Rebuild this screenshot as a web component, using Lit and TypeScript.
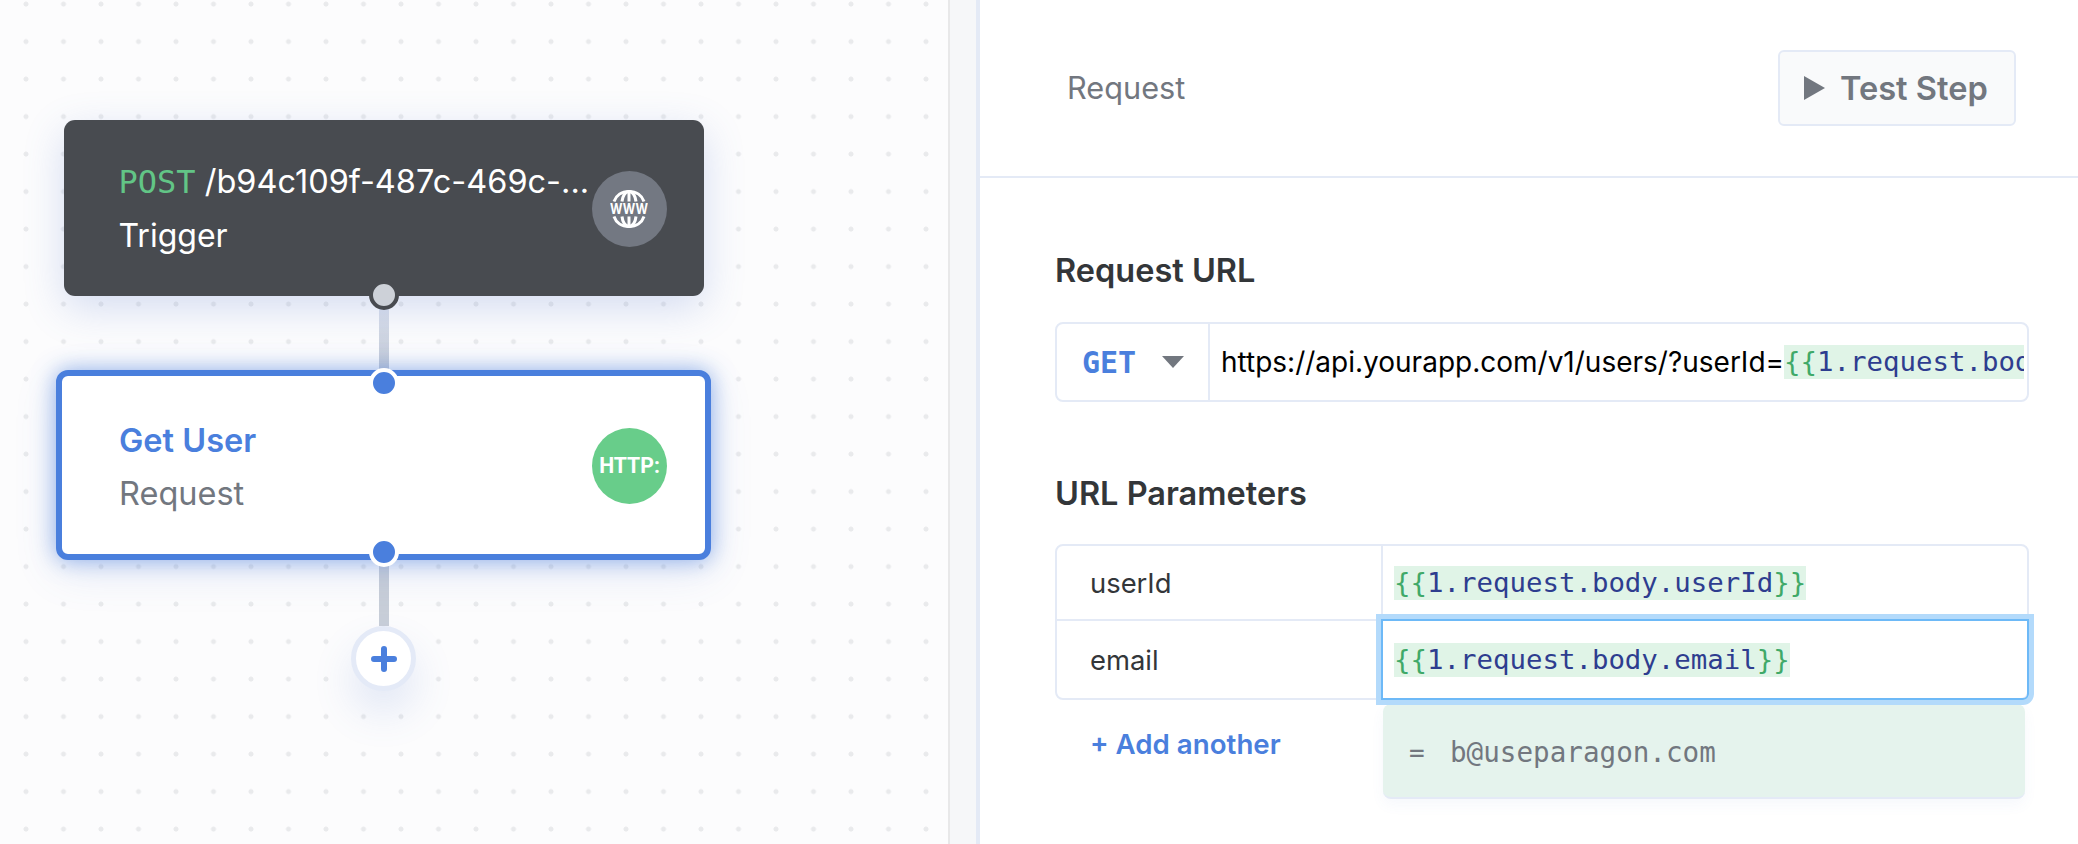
import { LitElement, html, css } from 'lit';
import { customElement } from 'lit/decorators.js';

const token = (path: string) => html`<span class="token"><i>{{</i>${path}<i>}}</i></span>`;

@customElement('app-root')
export class AppRoot extends LitElement {
  static styles = css`
    :host {
      display: flex;
      width: 2078px;
      height: 844px;
      overflow: hidden;
      background: #fff;
      font-family: Inter, 'Noto Sans', sans-serif;
    }

    /* ===== Canvas ===== */
    .canvas {
      flex: 0 0 948px;
      box-sizing: border-box;
      padding-top: 120px;
      background-color: #fcfcfd;
      background-image: radial-gradient(circle, #e9eaec 2.2px, transparent 2.8px);
      background-size: 37.5px 37.5px;
      background-position: 7.25px 22.85px;
    }

    .flow {
      width: 767px;
      display: flex;
      flex-direction: column;
      align-items: center;
    }

    .node {
      position: relative;
      z-index: 1;
      box-sizing: border-box;
      display: flex;
      align-items: center;
      justify-content: space-between;
      font-size: 32.5px;
      white-space: nowrap;
    }

    .node--trigger {
      width: 640px;
      height: 176px;
      padding: 1px 37px 0 55px;
      border-radius: 11px;
      background: #484b50;
      color: #fff;
      line-height: 54px;
      box-shadow: 0 12px 40px rgba(88, 122, 205, 0.24);
    }

    .node--step {
      width: 655px;
      height: 190px;
      padding: 4px 38px 0 57px;
      border: 6px solid #4a7fdd;
      border-radius: 12px;
      background: #fff;
      color: #72777f;
      line-height: 53px;
      box-shadow: 0 0 22px rgba(74, 127, 221, 0.6), 0 12px 44px rgba(88, 122, 205, 0.14);
    }

    .method {
      color: #62c586;
      font-family: 'DejaVu Sans Mono', monospace;
      font-size: 32px;
      font-weight: 400;
    }

    .light {
      font-size: 32px;
    }

    .title {
      color: #4a7fdd;
      font-weight: 600;
    }

    .icon {
      flex: none;
      width: 75px;
      height: 76px;
      display: flex;
      align-items: center;
      justify-content: center;
      border-radius: 50%;
    }

    .icon--www {
      background: #737882;
    }

    .icon--http {
      margin-top: -2px;
      background: #68cd8a;
      color: #fff;
      font-size: 21.2px;
      font-weight: 700;
      line-height: 1;
      font-family: Roboto, Inter, sans-serif;
    }

    .handle {
      position: absolute;
      left: 50%;
      width: 22px;
      height: 22px;
      margin-left: -15px;
      border-radius: 50%;
      border: 4px solid #fff;
      background: #4a7fdd;
    }

    .handle--out {
      bottom: -14px;
      background: #cdd1d8;
      border-color: #484b50;
    }

    .handle--in {
      top: -8px;
    }

    .handle--step-out {
      bottom: -13px;
    }

    .wire {
      width: 10px;
      background: #c8ced8;
    }

    .wire--top {
      height: 74px;
      background: linear-gradient(#e0e5f0, #c2c9d6);
    }

    .wire--bottom {
      height: 66px;
    }

    .add {
      position: relative;
      z-index: 1;
      box-sizing: border-box;
      width: 65px;
      height: 65px;
      display: flex;
      align-items: center;
      justify-content: center;
      border-radius: 50%;
      border: 5px solid #e4eaf7;
      background: #fff;
      box-shadow: 0 22px 40px rgba(88, 122, 205, 0.16);
    }

    /* ===== Gutter between canvas and panel ===== */
    .gutter {
      flex: 0 0 26px;
      border-left: 2px solid #e8e8e9;
      border-right: 4px solid #e4eaf6;
      background: #f6f7f9;
    }

    /* ===== Panel ===== */
    .panel {
      flex: 1;
      min-width: 0;
    }

    .header {
      box-sizing: border-box;
      height: 178px;
      padding: 0 62px 0 87px;
      display: flex;
      align-items: center;
      justify-content: space-between;
      border-bottom: 2px solid #e4eaf6;
      color: #72777f;
      font-size: 30.7px;
    }

    .header-title {
      margin-top: -2px;
    }

    .test {
      box-sizing: border-box;
      width: 238px;
      height: 76px;
      display: flex;
      align-items: center;
      gap: 15px;
      padding-left: 24px;
      border: 2px solid #e4eaf6;
      border-radius: 6px;
      background: #f9fafb;
      font-size: 32.6px;
      font-weight: 600;
      white-space: nowrap;
    }

    .body {
      padding: 73px 49px 0 75px;
    }

    .label {
      margin: 0 0 30px;
      color: #333639;
      font-size: 32.5px;
      font-weight: 600;
      line-height: 40px;
    }

    .url {
      box-sizing: border-box;
      height: 80px;
      display: flex;
      margin: 31px 0 72px;
      border: 2px solid #e4eaf6;
      border-radius: 8px;
      overflow: hidden;
    }

    .url-label {
      margin-bottom: 0;
    }

    .verb {
      flex: 0 0 153px;
      box-sizing: border-box;
      display: flex;
      align-items: center;
      justify-content: space-between;
      padding: 0 24px 0 25px;
      border-right: 2px solid #e4eaf6;
      color: #4a7fdd;
      font-family: 'DejaVu Sans Mono', monospace;
      font-size: 30px;
      font-weight: 700;
    }

    .address {
      flex: 1;
      min-width: 0;
      display: flex;
      align-items: center;
      margin-right: 3px;
      padding-left: 11px;
      overflow: hidden;
      white-space: nowrap;
      color: #000;
      font-size: 28px;
    }

    .token {
      display: inline-block;
      background: #e0f4e7;
      color: #2e3d8f;
      font-family: 'DejaVu Sans Mono', monospace;
      font-size: 27.4px;
      line-height: 34px;
      white-space: nowrap;
    }

    .token i {
      color: #3fa968;
      font-style: normal;
    }

    .address .token {
      flex: 1;
    }

    .params {
      box-sizing: border-box;
      height: 156px;
      display: grid;
      grid-template-columns: 324px 1fr;
      grid-template-rows: 75px 1fr;
      border: 2px solid #e4eaf6;
      border-radius: 8px;
      color: #333639;
      font-size: 27.4px;
    }

    .cell {
      box-sizing: border-box;
      display: flex;
      align-items: center;
    }

    .cell--key {
      padding-left: 33px;
    }

    .cell--value {
      padding-left: 11px;
      border-left: 2px solid #e4eaf6;
    }

    .cell--sep {
      border-bottom: 2px solid #e4eaf6;
    }

    .cell--focus {
      position: relative;
      z-index: 1;
      margin: -2px -2px -2px 0;
      border: 2px solid #6db9f7;
      border-radius: 0 0 6px 0;
      box-shadow: 0 0 0 5px #b3dafb;
    }

    .below {
      display: flex;
      margin-top: 4px;
    }

    .add-another {
      flex: 0 0 328px;
      box-sizing: border-box;
      height: 80px;
      display: flex;
      align-items: center;
      padding-left: 35px;
      color: #4a7fdd;
      font-size: 27.7px;
      font-weight: 600;
    }

    .preview {
      width: 642px;
      box-sizing: border-box;
      height: 95px;
      display: flex;
      align-items: center;
      padding: 4px 0 0 26px;
      border-bottom: 2px solid #e4eaf6;
      border-radius: 8px;
      background: #e5f3ed;
      color: #72777f;
      font-family: 'DejaVu Sans Mono', monospace;
      font-size: 27.6px;
      box-shadow: 0 6px 14px rgba(88, 122, 205, 0.05);
    }

    .preview span {
      width: 41px;
      font-size: 26px;
    }
  `;

  render() {
    return html`
      <section class="canvas">
        <div class="flow">
          <div class="node node--trigger">
            <div>
              <div><span class="method">POST</span> /b94c109f-487c-469c-...</div>
              <div class="light">Trigger</div>
            </div>
            <div class="icon icon--www">
              <svg width="38" height="38" viewBox="0 0 38 38" fill="none" stroke="#fff" stroke-width="3">
                <path d="M4 11.500C6 5.500 11.500 1.500 19 1.500S32 5.500 34 11.500" />
                <path d="M4 26.500C6 32.500 11.500 36.500 19 36.500S32 32.500 34 26.500" />
                <path d="M12 11.500C12.500 6.500 15 1.500 19 1.500S25.500 6.500 26 11.500" />
                <path d="M12 26.500C12.500 31.500 15 36.500 19 36.500S25.500 31.500 26 26.500" />
                <path d="M19 1.500V11.500M19 26.500V36.500" />
                <text x="19" y="24" text-anchor="middle" fill="#fff" stroke="none" font-family="Inter, sans-serif"
                  font-size="14" font-weight="700" textLength="38" lengthAdjust="spacingAndGlyphs">WWW</text>
              </svg>
            </div>
            <div class="handle handle--out"></div>
          </div>
          <div class="wire wire--top"></div>
          <div class="node node--step">
            <div class="handle handle--in"></div>
            <div>
              <div class="title">Get User</div>
              <div>Request</div>
            </div>
            <div class="icon icon--http">HTTP:</div>
            <div class="handle handle--step-out"></div>
          </div>
          <div class="wire wire--bottom"></div>
          <div class="add">
            <svg width="26" height="26" viewBox="0 0 26 26" stroke="#4a7fdd" stroke-width="6" stroke-linecap="round">
              <path d="M13 3V23M3 13H23" />
            </svg>
          </div>
        </div>
      </section>
      <div class="gutter"></div>
      <section class="panel">
        <header class="header">
          <span class="header-title">Request</span>
          <div class="test">
            <svg width="21" height="24" viewBox="0 0 21 24"><path d="M0 0L21 12L0 24Z" fill="#72777f" /></svg>
            Test Step
          </div>
        </header>
        <div class="body">
          <h2 class="label url-label">Request URL</h2>
          <div class="url">
            <div class="verb">
              GET
              <svg width="22" height="12" viewBox="0 0 22 12"><path d="M0 0H22L11 12Z" fill="#72777f" /></svg>
            </div>
            <div class="address">https://api.yourapp.com/v1/users/?userId=${token('1.request.body.userId')}</div>
          </div>
          <h2 class="label">URL Parameters</h2>
          <div class="params">
            <div class="cell cell--key cell--sep">userId</div>
            <div class="cell cell--value cell--sep">${token('1.request.body.userId')}</div>
            <div class="cell cell--key">email</div>
            <div class="cell cell--value cell--focus">${token('1.request.body.email')}</div>
          </div>
          <div class="below">
            <div class="add-another">+ Add another</div>
            <div class="preview"><span>=</span>b@useparagon.com</div>
          </div>
        </div>
      </section>
    `;
  }
}

declare global {
  interface HTMLElementTagNameMap {
    'app-root': AppRoot;
  }
}
